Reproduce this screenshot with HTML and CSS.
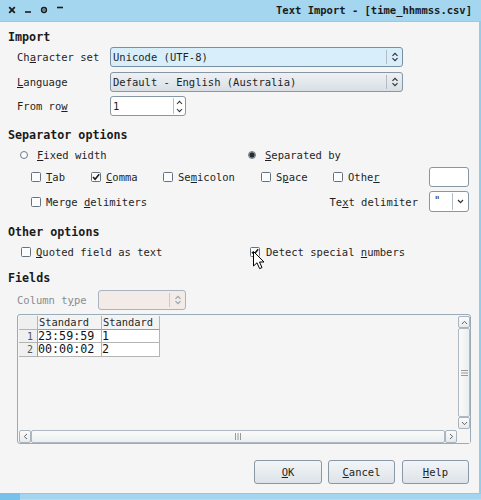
FILE: index.html
```html
<!DOCTYPE html>
<html>
<head>
<meta charset="utf-8">
<title>Text Import</title>
<link rel="stylesheet" href="styles.css">
</head>
<body>
<div class="window">
  <div class="titlebar">
    <div class="tb-buttons">
      <svg class="tb-icon" width="8" height="8" viewBox="0 0 8 8"><path d="M1.2 1.2 L6.8 6.8 M6.8 1.2 L1.2 6.8" stroke="#1c1c1c" stroke-width="1.8" fill="none"/></svg>
      <svg class="tb-icon" width="8" height="8" viewBox="0 0 8 8"><path d="M1 6 L7 6" stroke="#1c1c1c" stroke-width="1.6" fill="none"/></svg>
      <svg class="tb-icon" width="8" height="8" viewBox="0 0 8 8"><circle cx="4" cy="4" r="2.4" stroke="#1c1c1c" stroke-width="1.5" fill="none"/><circle cx="4" cy="4" r="0.8" fill="#1c1c1c"/></svg>
      <svg class="tb-icon" width="8" height="8" viewBox="0 0 8 8"><path d="M1 1.5 L7 1.5" stroke="#1c1c1c" stroke-width="1.6" fill="none"/></svg>
    </div>
    <div class="title">Text Import - [time_hhmmss.csv]</div>
  </div>

  <div class="content">
    <div class="heading heading-import">Import</div>

    <div class="form-row row-charset">
      <span class="form-label">Ch<u>a</u>racter set</span>
      <div class="combo combo-wide combo-focus">
        <span class="combo-value">Unicode (UTF-8)</span>
        <span class="combo-btn"><svg width="8" height="12" viewBox="0 0 8 12"><path d="M1.5 4.8 L4 2.3 L6.5 4.8 M1.5 7.2 L4 9.7 L6.5 7.2" stroke="#333" stroke-width="1.2" fill="none"/></svg></span>
      </div>
    </div>

    <div class="form-row row-language">
      <span class="form-label"><u>L</u>anguage</span>
      <div class="combo combo-wide combo-plain">
        <span class="combo-value">Default - English (Australia)</span>
        <span class="combo-btn"><svg width="8" height="12" viewBox="0 0 8 12"><path d="M1.5 4.8 L4 2.3 L6.5 4.8 M1.5 7.2 L4 9.7 L6.5 7.2" stroke="#333" stroke-width="1.2" fill="none"/></svg></span>
      </div>
    </div>

    <div class="form-row row-fromrow">
      <span class="form-label">From ro<u>w</u></span>
      <div class="spin">
        <span class="spin-value">1</span>
        <span class="spin-btns">
          <span class="spin-btn"><svg width="7" height="5" viewBox="0 0 7 5"><path d="M1 4 L3.5 1.3 L6 4" stroke="#333" stroke-width="1.1" fill="none"/></svg></span>
          <span class="spin-btn"><svg width="7" height="5" viewBox="0 0 7 5"><path d="M1 1 L3.5 3.7 L6 1" stroke="#333" stroke-width="1.1" fill="none"/></svg></span>
        </span>
      </div>
    </div>

    <div class="heading heading-sep">Separator options</div>

    <div class="radio-row">
      <label class="radio-opt radio-opt-fixed"><span class="radio"></span><span><u>F</u>ixed width</span></label>
      <label class="radio-opt"><span class="radio radio-on"></span><span><u>S</u>eparated by</span></label>
    </div>

    <div class="cb-row">
      <label class="cb-opt cb-tab"><span class="checkbox"></span><span><u>T</u>ab</span></label>
      <label class="cb-opt cb-comma"><span class="checkbox"><svg width="10" height="10" viewBox="0 0 10 10"><path d="M2 5 L4.1 7.3 L8.2 2.2" stroke="#1e1e1e" stroke-width="1.6" fill="none"/></svg></span><span><u>C</u>omma</span></label>
      <label class="cb-opt cb-semi"><span class="checkbox"></span><span>Se<u>m</u>icolon</span></label>
      <label class="cb-opt cb-space"><span class="checkbox"></span><span>S<u>p</u>ace</span></label>
      <label class="cb-opt cb-other"><span class="checkbox"></span><span>Othe<u>r</u></span></label>
      <span class="text-input"></span>
    </div>

    <div class="merge-row">
      <label class="cb-opt"><span class="checkbox"></span><span>Merge <u>d</u>elimiters</span></label>
      <div class="delim-group">
        <span class="delim-label">Te<u>x</u>t delimiter</span>
        <div class="small-combo">
          <span class="small-combo-value">"</span>
          <span class="small-combo-btn"><svg width="7" height="5" viewBox="0 0 7 5"><path d="M1 1 L3.5 3.7 L6 1" stroke="#333" stroke-width="1.2" fill="none"/></svg></span>
        </div>
      </div>
    </div>

    <div class="heading heading-other">Other options</div>

    <div class="other-row">
      <label class="cb-opt cb-quoted"><span class="checkbox"></span><span><u>Q</u>uoted field as text</span></label>
      <label class="cb-opt cb-detect"><span class="checkbox"><svg width="10" height="10" viewBox="0 0 10 10"><path d="M2 5 L4.1 7.3 L8.2 2.2" stroke="#1e1e1e" stroke-width="1.6" fill="none"/></svg></span><span>Detect special <u>n</u>umbers</span>
        <svg class="cursor" width="13" height="19" viewBox="0 0 13 19"><path d="M0.5 0.5 L0.5 15 L4 11.8 L6.6 17.6 L9 16.6 L6.5 11 L11 11 Z" fill="#fff" stroke="#000" stroke-width="1" stroke-linejoin="round"/></svg>
      </label>
    </div>

    <div class="heading heading-fields">Fields</div>

    <div class="form-row row-coltype">
      <span class="form-label form-label-coltype">Column t<u>y</u>pe</span>
      <div class="combo combo-disabled">
        <span class="combo-value"></span>
        <span class="combo-btn"><svg width="8" height="12" viewBox="0 0 8 12"><path d="M1.5 4.8 L4 2.3 L6.5 4.8 M1.5 7.2 L4 9.7 L6.5 7.2" stroke="#9aa3ab" stroke-width="1.2" fill="none"/></svg></span>
      </div>
    </div>

    <div class="preview">
      <div class="preview-data">
        <div class="grid">
          <div class="cell corner"></div>
          <div class="cell col-head">Standard</div>
          <div class="cell col-head">Standard</div>
          <div class="cell row-head">1</div>
          <div class="cell data">23:59:59</div>
          <div class="cell data">1</div>
          <div class="cell row-head">2</div>
          <div class="cell data">00:00:02</div>
          <div class="cell data">2</div>
        </div>
      </div>
      <div class="vscroll">
        <span class="sb-btn"><svg width="7" height="5" viewBox="0 0 7 5"><path d="M1 4 L3.5 1.3 L6 4" stroke="#666" stroke-width="1" fill="none"/></svg></span>
        <span class="sb-thumb sb-thumb-v"><svg width="7" height="6" viewBox="0 0 7 6"><path d="M0 0.5 H7 M0 3 H7 M0 5.5 H7" stroke="#999" stroke-width="1"/></svg></span>
        <span class="sb-btn"><svg width="7" height="5" viewBox="0 0 7 5"><path d="M1 1 L3.5 3.7 L6 1" stroke="#666" stroke-width="1" fill="none"/></svg></span>
      </div>
      <div class="hscroll">
        <span class="sb-btn"><svg width="5" height="7" viewBox="0 0 5 7"><path d="M4 1 L1.3 3.5 L4 6" stroke="#666" stroke-width="1" fill="none"/></svg></span>
        <span class="sb-thumb sb-thumb-h"><svg width="6" height="7" viewBox="0 0 6 7"><path d="M0.5 0 V7 M3 0 V7 M5.5 0 V7" stroke="#999" stroke-width="1"/></svg></span>
        <span class="sb-btn"><svg width="5" height="7" viewBox="0 0 5 7"><path d="M1 1 L3.7 3.5 L1 6" stroke="#666" stroke-width="1" fill="none"/></svg></span>
      </div>
      <div class="sb-corner"></div>
    </div>

    <div class="button-row">
      <button class="btn btn-ok"><u>O</u>K</button>
      <button class="btn btn-cancel"><u>C</u>ancel</button>
      <button class="btn btn-help"><u>H</u>elp</button>
    </div>
  </div>

  <div class="bottombar">
    <div class="bb-left"></div>
    <div class="bb-rest"></div>
  </div>
</div>
</body>
</html>
```

FILE: styles.css
```css
* { box-sizing: border-box; }

html, body {
  margin: 0;
  padding: 0;
  background: #f5f5f5;
}

body {
  font-family: "DejaVu Sans Mono", monospace;
  font-size: 10.5px;
  color: #1f1f1f;
}

u { text-decoration: underline; text-underline-offset: 1px; }

.window {
  width: 481px;
  height: 500px;
  display: flex;
  flex-direction: column;
  overflow: hidden;
}

/* Title bar */
.titlebar {
  height: 22px;
  flex: none;
  background: #a4d6ef;
  border-bottom: 1px solid #93cbe9;
  display: flex;
  align-items: center;
  justify-content: space-between;
  padding: 0 9px 1px 8px;
}

.tb-buttons {
  display: flex;
  align-items: center;
  gap: 8px;
}

.tb-icon { display: block; }

.title {
  font-weight: bold;
  font-size: 10.5px;
  color: #1a1a1a;
  letter-spacing: 0;
}

/* Content */
.content {
  flex: 1;
  display: flex;
  flex-direction: column;
  background: #f5f5f5;
  border-right: 2px solid #8fcdec;
}

.heading {
  height: 16px;
  line-height: 16px;
  font-weight: bold;
  font-size: 11.7px;
  padding-left: 8px;
  color: #1a1a1a;
}

.heading-import { margin-top: 7px; }
.heading-sep { margin-top: 11px; }
.heading-other { margin-top: 12px; }
.heading-fields { margin-top: 10px; }

.form-row {
  height: 20px;
  display: flex;
  align-items: center;
  padding-left: 17px;
}

.row-charset { margin-top: 2px; }
.row-language { margin-top: 5px; }
.row-fromrow { margin-top: 4px; }
.row-coltype { margin-top: 4px; }

.form-label { width: 93px; }
.form-label-coltype { width: 81px; color: #8c8c8c; }

/* Combo boxes */
.combo {
  height: 20px;
  display: flex;
  border: 1px solid #8596a5;
  border-radius: 3px;
  overflow: hidden;
}

.combo-wide { width: 293px; }

.combo-focus { background: #d8effb; border-color: #7990a3; }

.combo-plain { background: linear-gradient(#edf1f4, #d9dfe5); }

.combo-disabled {
  width: 88px;
  background: #f3ebe8;
  border-color: #a9b4be;
}

.combo-value {
  flex: 1;
  padding-left: 2px;
  line-height: 18px;
  white-space: nowrap;
}

.combo-btn {
  width: 16px;
  display: flex;
  align-items: center;
  justify-content: center;
  border-left: 1px solid #b3bcc5;
  margin: 2px 0;
}

.combo-disabled .combo-btn { border-left-color: #c5cbd0; }

/* Spin */
.spin {
  width: 76px;
  height: 20px;
  display: flex;
  background: #fff;
  border: 1px solid #8596a5;
  border-radius: 3px;
}

.spin-value {
  flex: 1;
  padding-left: 2px;
  line-height: 18px;
}

.spin-btns {
  width: 12px;
  display: flex;
  flex-direction: column;
  border-left: 1px solid #b3bcc5;
  margin: 1px 0;
}

.spin-btn {
  flex: 1;
  display: flex;
  align-items: center;
  justify-content: center;
}

/* Radios */
.radio-row {
  margin-top: 4px;
  height: 16px;
  display: flex;
  align-items: center;
  padding-left: 20px;
}

.radio-opt {
  display: flex;
  align-items: center;
  gap: 9px;
}

.radio-opt-fixed { width: 228px; }

.radio {
  width: 8px;
  height: 8px;
  border-radius: 50%;
  border: 1px solid #6f7a86;
  background: #f8fafb;
}

.radio-on {
  background: radial-gradient(circle, #2b2b2b 0 2.3px, #9aa1a8 2.8px 100%);
  border-color: #6f7a86;
}

/* Checkboxes */
.cb-row {
  margin-top: 4px;
  height: 20px;
  display: flex;
  align-items: center;
  padding-left: 31px;
}

.cb-opt {
  display: flex;
  align-items: center;
  gap: 5px;
}

.cb-tab { width: 60px; }
.cb-comma { width: 72px; }
.cb-semi { width: 98px; }
.cb-space { width: 72px; }
.cb-other { width: 96px; }

.checkbox {
  width: 10px;
  height: 10px;
  border: 1px solid #67727e;
  border-radius: 1.5px;
  background: #fbfcfd;
  display: flex;
  align-items: center;
  justify-content: center;
  flex: none;
}

.checkbox svg { display: block; margin: -1px; }

.text-input {
  width: 40px;
  height: 20px;
  background: #fff;
  border: 1px solid #8596a5;
  border-radius: 3px;
}

.merge-row {
  margin-top: 4px;
  height: 21px;
  display: flex;
  align-items: center;
  justify-content: space-between;
  padding-left: 31px;
  padding-right: 10px;
}

.delim-group {
  display: flex;
  align-items: center;
  gap: 11px;
}

.small-combo {
  width: 40px;
  height: 21px;
  display: flex;
  background: #fff;
  border: 1px solid #8596a5;
  border-radius: 3px;
}

.small-combo-value {
  flex: 1;
  padding-left: 4px;
  line-height: 17px;
}

.small-combo-btn {
  width: 16px;
  display: flex;
  align-items: center;
  justify-content: center;
  border-left: 1px solid #b3bcc5;
  margin: 1px 0;
}

.other-row {
  margin-top: 4px;
  height: 16px;
  display: flex;
  align-items: center;
  padding-left: 21px;
}

.cb-quoted { width: 229px; }

.cb-detect { position: relative; gap: 6px; }

.cursor {
  position: absolute;
  left: 3px;
  top: 5px;
}

/* Preview table */
.preview {
  margin: 4px 8px 0 17px;
  height: 130px;
  border: 1px solid #9aabb8;
  border-radius: 3px;
  background: #f5f5f5;
  display: grid;
  grid-template-columns: 1fr 12px;
  grid-template-rows: 1fr 13px;
  column-gap: 1px;
  row-gap: 1px;
  padding: 1px 0 0 1px;
}

.preview-data { overflow: hidden; }

.grid {
  display: grid;
  grid-template-columns: 19px 64px 58px;
  grid-template-rows: 14px 13px 14px;
}

.cell {
  border-right: 1px solid #b4b4b4;
  border-bottom: 1px solid #b4b4b4;
  white-space: nowrap;
  overflow: hidden;
}

.corner { background: #efefef; }

.col-head {
  background: #f3f3f3;
  font-size: 10.4px;
  line-height: 13px;
  padding-left: 1px;
  color: #2a2a2a;
  border-bottom-color: #9c9c9c;
}

.row-head {
  background: #f0f0f0;
  font-size: 10px;
  text-align: right;
  padding-right: 4px;
  line-height: 13px;
  color: #555;
  border-right-color: #9c9c9c;
}

.data {
  background: #fff;
  font-size: 11.7px;
  line-height: 12px;
  color: #111;
}

.vscroll {
  display: flex;
  flex-direction: column;
  padding-top: 0;
}

.hscroll {
  display: flex;
}

.sb-btn {
  flex: none;
  width: 12px;
  height: 12px;
  border: 1px solid #a9b4bf;
  border-radius: 2px;
  background: linear-gradient(#fbfbfb, #e7eaed);
  display: flex;
  align-items: center;
  justify-content: center;
}

.hscroll .sb-btn { height: 13px; }

.sb-thumb {
  flex: 1;
  border: 1px solid #aeb8c2;
  border-radius: 2px;
  display: flex;
  align-items: center;
  justify-content: center;
}

.sb-thumb-v { background: linear-gradient(90deg, #fafafa, #eceef0); }
.sb-thumb-h { background: linear-gradient(#fafafa, #eceef0); }

.sb-corner { background: #f5f5f5; }

/* Buttons */
.button-row {
  margin-top: 16px;
  display: flex;
  justify-content: flex-end;
  padding-right: 10px;
}

.btn {
  height: 24px;
  font-family: "DejaVu Sans Mono", monospace;
  font-size: 10.5px;
  color: #1f1f1f;
  border: 1px solid #8a97a4;
  border-radius: 3px;
  background: linear-gradient(#f3f5f7, #dde3e9);
  padding: 0;
}

.btn-ok { width: 68px; }
.btn-cancel { width: 67px; margin-left: 6px; }
.btn-help { width: 67px; margin-left: 7px; }

/* Bottom bar */
.bottombar {
  height: 7px;
  flex: none;
  display: flex;
}

.bb-left {
  width: 20px;
  background: #77c2ea;
}

.bb-rest {
  flex: 1;
  background: #a3d5ee;
  border-top: 1px solid #8ecbea;
  border-bottom: 1px solid #b5dcf1;
}
```
